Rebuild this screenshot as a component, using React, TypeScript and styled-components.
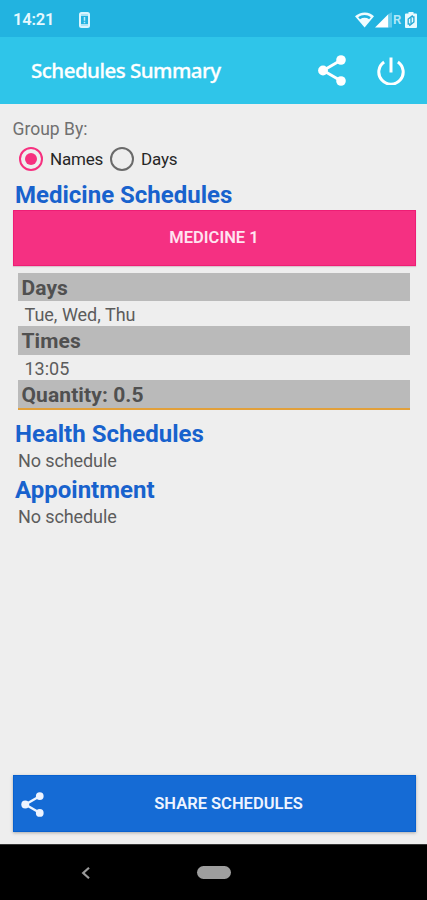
import React from 'react';
import styled, { createGlobalStyle } from 'styled-components';

const GlobalStyle = createGlobalStyle`
  * { box-sizing: border-box; }
  body { margin: 0; background: #eeeeee; }
`;

const Screen = styled.div`
  width: 427px;
  height: 900px;
  display: flex;
  flex-direction: column;
  overflow: hidden;
  background: #eeeeee;
  font-family: Roboto, sans-serif;
  color: #5c5c5c;
`;

const StatusBar = styled.div`
  height: 37px;
  display: flex;
  align-items: center;
  padding: 2px 10px 0 13px;
  background: #22b3e0;
  color: #e6f9ff;
`;

const Clock = styled.span`
  width: 66px;
  font-size: 16.5px;
  font-weight: 600;
  letter-spacing: -0.2px;
`;

const StatusIcons = styled.div`
  display: flex;
  align-items: center;
  margin-left: auto;
`;

const Roaming = styled.span`
  width: 12px;
  font-size: 13px;
  font-weight: 600;
  line-height: 16px;
  padding: 1px 0 0 0;
  color: #b5e8f8;
`;

const AppBar = styled.header`
  height: 67px;
  display: flex;
  align-items: center;
  padding: 0 22px 0 31px;
  background: #2fc5e9;
  color: #fff;
`;

const Title = styled.h1`
  flex: 1;
  margin: 0;
  padding-bottom: 1px;
  font-family: "Noto Sans", sans-serif;
  font-size: 20.5px;
  font-weight: 500;
  letter-spacing: -0.52px;
  line-height: 28px;
  white-space: nowrap;
  -webkit-text-stroke: 0.3px #fff;
`;

const IconButton = styled.button<{ $gap?: number }>`
  display: flex;
  padding: 0;
  border: 0;
  margin-left: ${({ $gap = 0 }) => $gap}px;
  background: none;
  color: inherit;
`;

const Content = styled.main`
  height: 740px;
  display: flex;
  flex-direction: column;
  padding: 13px 11.5px 12px 12.5px;
`;

const GroupLabel = styled.div`
  height: 24px;
  font-size: 17.5px;
  line-height: 24px;
  color: #707070;
`;

const RadioRow = styled.div`
  height: 36px;
  display: flex;
  align-items: center;
  padding-left: 6.5px;
`;

const RadioOption = styled.label<{ $width: number }>`
  width: ${({ $width }) => $width}px;
  display: flex;
  align-items: center;
  gap: 7px;
  font-size: 17px;
  letter-spacing: -0.2px;
  color: #262626;
`;

const RadioMark = styled.span<{ $on?: boolean }>`
  flex: none;
  width: 24px;
  height: 24px;
  display: grid;
  place-items: center;
  border: 2px solid ${({ $on }) => ($on ? '#f6307f' : '#6a6a6a')};
  border-radius: 50%;
  &::after {
    content: '';
    width: 12px;
    height: 12px;
    border-radius: 50%;
    background: ${({ $on }) => ($on ? '#f6307f' : 'transparent')};
  }
`;

const Heading = styled.h2<{ $height?: number; $top?: number }>`
  height: ${({ $height = 29 }) => $height}px;
  margin: 0;
  padding: ${({ $top = 1 }) => $top}px 0 0 2.5px;
  font-size: 24px;
  font-weight: 700;
  line-height: 29px;
  color: #1862cd;
`;

const MedicineButton = styled.button`
  height: 56px;
  flex: none;
  padding: 0;
  border: 1px solid #ee1d75;
  background: #f53082;
  color: #ffe3f0;
  font: 600 16.5px/20px Roboto, sans-serif;
  box-shadow: 0 1px 1px #d9c5cd;
`;

const Details = styled.section`
  margin: 7px 5.5px 9px;
  border-bottom: 2px solid #e2a03a;
`;

const DetailTitle = styled.h3<{ $height?: number }>`
  height: ${({ $height = 28 }) => $height}px;
  margin: 0;
  padding-left: 3.5px;
  background: #bababa;
  color: #505050;
  font-size: 21px;
  font-weight: 700;
  line-height: 31px;
  letter-spacing: 0.1px;
`;

const DetailText = styled.div`
  height: 25px;
  padding-left: 6.5px;
  font-size: 18px;
  line-height: 27px;
`;

const EmptyText = styled.div`
  height: 27px;
  padding-left: 5.5px;
  font-size: 18px;
  line-height: 26px;
  letter-spacing: -0.1px;
`;

const ShareButton = styled.button`
  height: 57px;
  display: flex;
  align-items: center;
  margin-top: auto;
  padding: 1px 0 0 7px;
  border: 1px solid #0861cf;
  background: #156bd5;
  color: #eef4ff;
  font: 600 16.5px/20px Roboto, sans-serif;
  box-shadow: 0 1px 3px #aaa;
`;

const ShareLabel = styled.span`
  flex: 1;
  text-align: center;
  padding-right: 1px;
`;

const NavBar = styled.nav`
  height: 56px;
  display: flex;
  align-items: center;
  padding-left: 81px;
  gap: 107px;
  background: #000;
  border-top: 1px solid #363636;
`;

const HomePill = styled.span`
  width: 34px;
  height: 13px;
  border-radius: 7px;
  background: #9e9e9e;
`;

const ShareIcon = ({ width, height }: { width: number; height: number }) => (
  <svg width={width} height={height} viewBox="0 0 28 31" fill="currentColor">
    <path d="M22.8 5.2 5.2 15.5 22.8 25.8" fill="none" stroke="currentColor" strokeWidth="2.9" />
    <circle cx="23" cy="5" r="4.8" />
    <circle cx="5" cy="15.5" r="4.9" />
    <circle cx="23" cy="26" r="4.8" />
  </svg>
);

const PowerIcon = () => (
  <svg width="28" height="28" viewBox="0 0 28 28" fill="none" stroke="currentColor" strokeWidth="3">
    <path d="M14 .5v15M7.1 4.9a12.2 12.2 0 1 0 13.8 0" />
  </svg>
);

const NoticeIcon = () => (
  <svg width="11" height="16" viewBox="0 0 11 16" fill="none">
    <rect x="1" y="1" width="9" height="14" rx="1.5" stroke="#d9f5fe" strokeWidth="2" />
    <path d="M2 3h7M2 13h7" stroke="#d9f5fe" strokeWidth="1.6" />
    <path d="M5.5 5v3.8M5.5 9.8v1.4" stroke="#bcebfa" strokeWidth="1.5" />
  </svg>
);

const WifiIcon = () => (
  <svg width="20" height="16" viewBox="0 0 20 16">
    <path d="M0 4.2C5.5-.9 14.5-.9 19 4.2L9.6 15.5Z" fill="#f0fcff" />
    <path d="M3.2 5.2c3.8-3 9-3 12.6 0l-1.7 2c-2.7-1.8-6.2-1.8-9.1 0Z" fill="#22b3e0" />
  </svg>
);

const SignalIcon = () => (
  <svg width="18" height="16" viewBox="0 0 18 16">
    <path d="M0 15.5 13.5 2v13.5Z" fill="#fff" />
    <path d="M13.5 2 17 .2v15.3h-3.5Z" fill="#68cdec" />
  </svg>
);

const BatteryIcon = () => (
  <svg width="12" height="16" viewBox="0 0 12 16">
    <path d="M1 1.5h2.5V0h5v1.5H11a1 1 0 0 1 1 1V15a1 1 0 0 1-1 1H1a1 1 0 0 1-1-1V2.5a1 1 0 0 1 1-1Z" fill="#e6faff" />
    <path d="M7.7 3.4 3.2 7v5h1.6M4.3 13.7 8.9 10V5H7.4M6 5v7" fill="none" stroke="#22a8d4" strokeWidth="1.3" />
  </svg>
);

const BackIcon = () => (
  <svg width="9" height="12" viewBox="0 0 9 12">
    <path d="M8 .8 2.2 6 8 11.2" fill="none" stroke="#9a9a9a" strokeWidth="2.2" />
  </svg>
);

export default function App() {
  return (
    <Screen>
      <GlobalStyle />
      <StatusBar>
        <Clock>14:21</Clock>
        <NoticeIcon />
        <StatusIcons>
          <WifiIcon />
          <SignalIcon />
          <Roaming>R</Roaming>
          <BatteryIcon />
        </StatusIcons>
      </StatusBar>
      <AppBar>
        <Title>Schedules Summary</Title>
        <IconButton aria-label="Share"><ShareIcon width={28} height={31} /></IconButton>
        <IconButton aria-label="Power" $gap={31}><PowerIcon /></IconButton>
      </AppBar>
      <Content>
        <GroupLabel>Group By:</GroupLabel>
        <RadioRow>
          <RadioOption $width={91}><RadioMark $on />Names</RadioOption>
          <RadioOption $width={80}><RadioMark />Days</RadioOption>
        </RadioRow>
        <Heading $height={33} $top={4}>Medicine Schedules</Heading>
        <MedicineButton>MEDICINE 1</MedicineButton>
        <Details>
          <DetailTitle>Days</DetailTitle>
          <DetailText>Tue, Wed, Thu</DetailText>
          <DetailTitle $height={29}>Times</DetailTitle>
          <DetailText>13:05</DetailText>
          <DetailTitle>Quantity: 0.5</DetailTitle>
        </Details>
        <Heading>Health Schedules</Heading>
        <EmptyText>No schedule</EmptyText>
        <Heading>Appointment</Heading>
        <EmptyText>No schedule</EmptyText>
        <ShareButton>
          <ShareIcon width={23} height={25} />
          <ShareLabel>SHARE SCHEDULES</ShareLabel>
        </ShareButton>
      </Content>
      <NavBar>
        <BackIcon />
        <HomePill />
      </NavBar>
    </Screen>
  );
}
